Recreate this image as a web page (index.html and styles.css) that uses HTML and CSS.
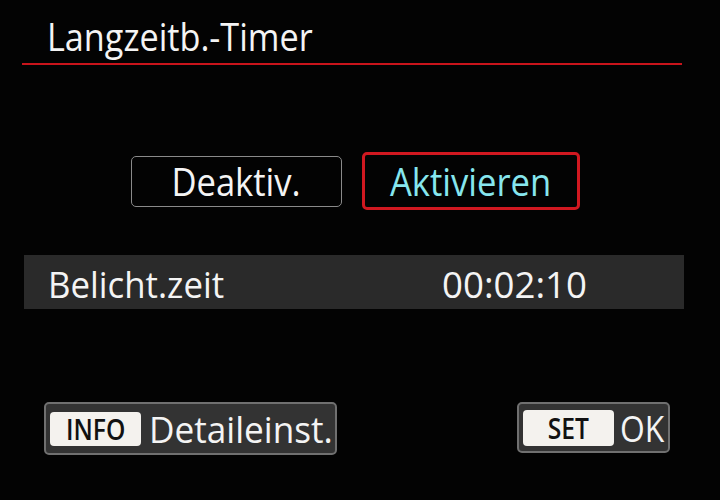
FILE: index.html
```html
<!DOCTYPE html>
<html lang="de">

<head>
  <meta charset="UTF-8">
  <meta name="viewport" content="width=device-width, initial-scale=1.0">
  <title>Langzeitb.-Timer</title>
  <link rel="stylesheet" href="styles.css">
</head>

<body>
  <div class="screen">
    <div class="head">
      <h1 class="title">Langzeitb.-Timer</h1>
    </div>

    <div class="choice">
      <div class="opt"><span class="opt-text">Deaktiv.</span></div>
      <div class="opt active"><span class="opt-text">Aktivieren</span></div>
    </div>

    <div class="row">
      <span class="label">Belicht.zeit</span>
      <span class="value">00:02:10</span>
    </div>

    <div class="foot">
      <div class="key-btn info">
        <span class="key"><span class="key-label">INFO</span></span>
        <span class="key-text">Detaileinst.</span>
      </div>
      <div class="key-btn set">
        <span class="key"><span class="key-label">SET</span></span>
        <span class="key-text ok">OK</span>
      </div>
    </div>
  </div>
</body>

</html>
```

FILE: styles.css
```css
* {
  margin: 0;
  padding: 0;
  box-sizing: border-box;
}

body {
  background-color: #030303;
  font-family: "Open Sans", "Noto Sans", sans-serif;
  color: #f4f4f4;
}

.screen {
  width: 720px;
  height: 500px;
  display: flex;
  flex-direction: column;
}

/* Kopfzeile mit roter Linie */
.head {
  margin: 0 38px 0 22px;
  height: 65px;
  padding: 14px 0 0 25px;
  border-bottom: 2px solid #c8141b;
}

.title {
  font-weight: 400;
  font-size: 38px;
  line-height: 44px;
  transform: scaleX(0.9);
  transform-origin: left center;
}

/* Auswahl */
.choice {
  display: flex;
  align-items: center;
  gap: 20px;
  margin-top: 87px;
  padding-left: 131px;
  height: 58px;
}

.opt {
  width: 211px;
  height: 51px;
  border: 1.5px solid #8a8a8a;
  border-radius: 5px;
  display: flex;
  align-items: center;
  justify-content: center;
  font-size: 38px;
}

.opt-text {
  display: inline-block;
  transform: scaleX(0.91);
}

.opt.active {
  width: 218px;
  height: 58px;
  border: 3px solid #d01820;
  color: #86e6ee;
}

/* Belichtungszeit */
.row {
  margin: 45px 36px 0 24px;
  height: 54px;
  background-color: #2a2a2a;
  display: flex;
  align-items: center;
  padding: 2px 0 0 24px;
  font-size: 37px;
}

.label {
  display: inline-block;
  width: 394px;
  flex-shrink: 0;
  transform: scaleX(0.94);
  transform-origin: left center;
}

.value {
  display: inline-block;
  transform: scaleX(0.99);
  transform-origin: left center;
}

/* Tasten unten */
.foot {
  display: flex;
  justify-content: space-between;
  align-items: flex-start;
  margin: 93px 50px 0 44px;
}

.key-btn {
  display: flex;
  align-items: center;
  background-color: #333;
  border: 2px solid #707070;
  border-radius: 5px;
  padding: 0 4px;
  overflow: hidden;
}

.info {
  width: 293px;
  height: 53px;
}

.set {
  width: 153px;
  height: 51px;
}

.key {
  flex-shrink: 0;
  width: 91px;
  height: 34px;
  background-color: #f4f2ee;
  color: #111;
  border-radius: 4px;
  display: flex;
  align-items: center;
  justify-content: center;
  font-size: 28px;
  font-weight: 600;
}

.key-label {
  display: inline-block;
  transform: scaleX(0.88);
}

.set .key {
  height: 36px;
}

.key-text {
  display: inline-block;
  flex-shrink: 0;
  font-size: 37px;
  margin-left: 8px;
  transform: scaleX(0.95);
  transform-origin: left center;
}

.key-text.ok {
  margin-left: 6px;
  transform: scaleX(0.86);
}
```
